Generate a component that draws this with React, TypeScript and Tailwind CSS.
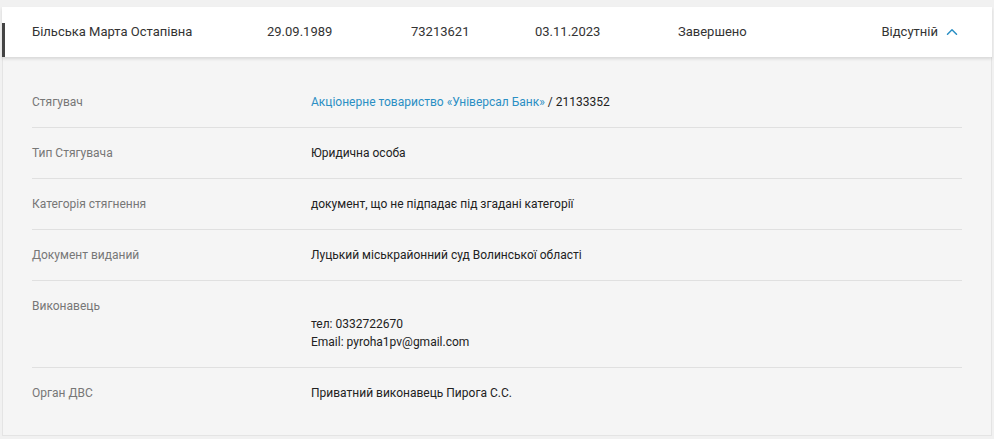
import { ChevronUp } from "lucide-react";

const rows = [
  { label: "Стягувач", value: "creditor" },
  { label: "Тип Стягувача", value: "Юридична особа" },
  { label: "Категорія стягнення", value: "документ, що не підпадає під згадані категорії" },
  { label: "Документ виданий", value: "Луцький міськрайонний суд Волинської області" },
  { label: "Виконавець", value: "executor" },
  { label: "Орган ДВС", value: "Приватний виконавець Пирога С.С." },
];

function Value({ value }: { value: string }) {
  if (value === "creditor") {
    return (
      <span>
        <span className="text-[#2b8fc4]">Акціонерне товариство «Універсал Банк»</span> / 21133352
      </span>
    );
  }
  if (value === "executor") {
    return (
      <div className="flex flex-col">
        <span className="h-[18px]"></span>
        <span>тел: 0332722670</span>
        <span>Email: pyroha1pv@gmail.com</span>
      </div>
    );
  }
  return <span>{value}</span>;
}

export default function App() {
  return (
    <div
      className="w-[994px] h-[439px] bg-[#f1f1f1] pt-[7px] pl-[2px] pr-[2px] overflow-hidden"
      style={{ fontFamily: "Roboto, 'Liberation Sans', sans-serif" }}
    >
      <div className="relative bg-white h-[50px] grid grid-cols-[235px_144px_124px_143px_1fr] items-center px-[30px] text-[13px] text-[#333] shadow-[0_2px_3px_rgba(0,0,0,0.12)] z-10">
        <div className="absolute left-0 top-[16px] bottom-0 w-[3px] bg-[#444]"></div>
        <span>Більська Марта Остапівна</span>
        <span>29.09.1989</span>
        <span>73213621</span>
        <span>03.11.2023</span>
        <div className="flex items-center justify-between">
          <span>Завершено</span>
          <span className="flex items-center gap-[5px]">
            Відсутній
            <ChevronUp size={18} strokeWidth={2} className="text-[#2b8fc4] mr-[1px]" />
          </span>
        </div>
      </div>
      <div className="bg-[#f5f5f5] border-l border-r border-b border-[#e4e4e4] px-[29px] pt-[20px] pb-[17px] text-[12px] leading-[18px]">
        {rows.map((r, i) => (
          <div
            key={r.label}
            className={
              "grid grid-cols-[279px_1fr] py-4 " +
              (i < rows.length - 1 ? "border-b border-[#e0e0e0]" : "")
            }
          >
            <span className="text-[#777]">{r.label}</span>
            <div className="text-[#222]">
              <Value value={r.value} />
            </div>
          </div>
        ))}
      </div>
    </div>
  );
}
